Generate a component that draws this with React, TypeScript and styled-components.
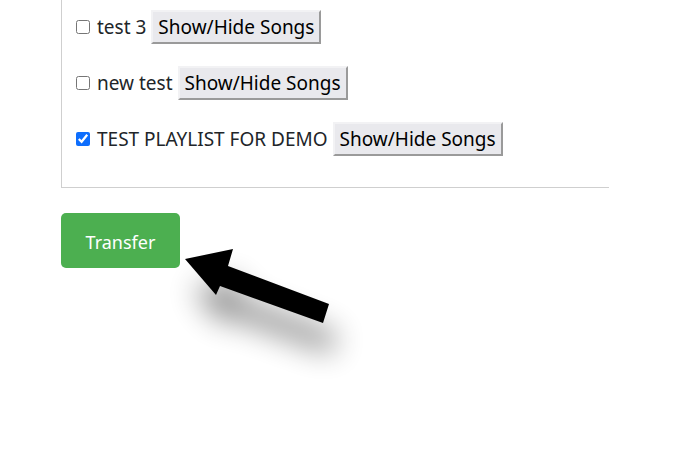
import React from "react";
import styled, { createGlobalStyle } from "styled-components";

const Global = createGlobalStyle`
  html, body { margin: 0; padding: 0; background: #fff; }
  body { font-family: "Noto Sans", "Open Sans", sans-serif; color: #212529; }
`;

const Page = styled.div`
  position: relative;
  width: 700px;
  height: 450px;
  overflow: hidden;
  padding-left: 61px;
  box-sizing: border-box;
`;

const Panel = styled.div`
  width: 548px;
  box-sizing: border-box;
  border-left: 1px solid #cfcfcf;
  border-bottom: 1px solid #cfcfcf;
  padding: 10px 0 31px 13px;
  display: flex;
  flex-direction: column;
  gap: 22px;
`;

const Row = styled.div`
  display: flex;
  align-items: center;
  height: 34px;
`;

const Check = styled.input`
  width: 14px;
  height: 14px;
  margin: 0 7px 0 1px;
  accent-color: #0d6efd;
`;

const Label = styled.span`
  font-size: 19px;
  margin-right: 5px;
  white-space: nowrap;
`;

const ToggleButton = styled.button`
  height: 34px;
  padding: 0 5px;
  background: #e9e9ed;
  border-style: solid;
  border-width: 2px;
  border-color: #f2f2f4 #9a9a9a #9a9a9a #f2f2f4;
  border-radius: 0;
  font-family: inherit;
  font-size: 19px;
  color: #000;
  white-space: nowrap;
`;

const TransferButton = styled.button`
  margin-top: 25px;
  width: 119px;
  height: 55px;
  background: #4caf50;
  color: #fff;
  border: none;
  border-radius: 5px;
  font-family: inherit;
  font-size: 18px;
  padding-top: 3px;
`;

const ArrowLayer = styled.svg`
  position: absolute;
  left: 0;
  top: 0;
  pointer-events: none;
`;

const playlists = [
  { name: "test 3", checked: false },
  { name: "new test", checked: false },
  { name: "TEST PLAYLIST FOR DEMO", checked: true },
];

const arrowPoints =
  "185,259 233,249 228,266 329,304 323,323 220,286 216,295";

export default function App() {
  return (
    <>
      <Global />
      <Page>
        <Panel>
          {playlists.map((p) => (
            <Row key={p.name}>
              <Check type="checkbox" defaultChecked={p.checked} />
              <Label>{p.name}</Label>
              <ToggleButton>Show/Hide Songs</ToggleButton>
            </Row>
          ))}
        </Panel>
        <TransferButton>Transfer</TransferButton>
        <ArrowLayer width="700" height="450" viewBox="0 0 700 450">
          <defs>
            <filter id="shadow" x="-50%" y="-50%" width="200%" height="200%">
              <feGaussianBlur stdDeviation="15" />
            </filter>
          </defs>
          <polygon
            points={arrowPoints}
            fill="#000"
            opacity="0.45"
            filter="url(#shadow)"
            transform="translate(8 30)"
          />
          <polygon points={arrowPoints} fill="#000" />
        </ArrowLayer>
      </Page>
    </>
  );
}
